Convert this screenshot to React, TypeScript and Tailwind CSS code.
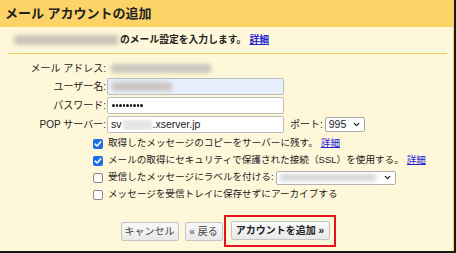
import { ChevronDown } from 'lucide-react'

const font = { fontFamily: '"Liberation Sans", "Noto Sans CJK JP", sans-serif' }

function Blur({ className }: { className: string }) {
  return <div className={`rounded-[3px] bg-[#c9c5bd] blur-[2px] ${className}`} />
}

function Check({ on }: { on?: boolean }) {
  if (on) {
    return (
      <span className="flex h-[10px] w-[10px] shrink-0 items-center justify-center rounded-[2px] bg-[#1a6fe6]">
        <svg width="8" height="8" viewBox="0 0 8 8" fill="none">
          <path d="M1.2 4.2 3.1 6 6.8 1.8" stroke="white" strokeWidth="1.6" strokeLinecap="round" strokeLinejoin="round" />
        </svg>
      </span>
    )
  }
  return <span className="h-[10px] w-[10px] shrink-0 rounded-[2px] border border-[#8a8a8a] bg-white" />
}

function Link({ children }: { children: string }) {
  return <span className="ml-[3px] text-[#2323d8] underline">{children}</span>
}

function Label({ children }: { children: string }) {
  return <div className="w-[107px] shrink-0 pr-[1px] text-right">{children}</div>
}

export default function App() {
  return (
    <div className="h-[253px] w-[456px] bg-[#1a1a1a] text-[#222]" style={font}>
      <div className="flex h-[251px] w-[454px] flex-col border-r border-[#f7cf62] bg-[#fff7d9]">
        {/* Header */}
        <div className="flex h-[27px] shrink-0 items-center bg-[#fcd367] px-[5px] text-[13px] font-bold">
          メール アカウントの追加
        </div>

        {/* Intro line */}
        <div className="flex h-[26px] items-center pl-[14px] text-[9.8px] font-bold">
          <Blur className="mr-[1px] h-[10px] w-[105px]" />
          のメール設定を入力します。
          <Link>詳細</Link>
        </div>
        <div className="mx-[8px] w-[439px] border-b border-[#f5cc5c]" />

        {/* Form */}
        <div className="flex flex-col gap-[2px] pt-[6px] text-[10px]">
          <div className="flex h-[16px] items-center">
            <Label>メール アドレス:</Label>
            <Blur className="ml-[4px] h-[9px] w-[100px]" />
          </div>
          <div className="flex h-[17px] items-center">
            <Label>ユーザー名:</Label>
            <div className="flex h-[17px] w-[177px] items-center rounded-[2px] border border-[#bcbcbc] bg-[#e8f0fe] px-[4px]">
              <Blur className="h-[9px] w-[60px] bg-[#c5cbd6]" />
            </div>
          </div>
          <div className="flex h-[17px] items-center">
            <Label>パスワード:</Label>
            <div className="flex h-[17px] w-[177px] items-center gap-[1px] rounded-[2px] border border-[#bcbcbc] bg-white px-[4px]">
              {Array.from({ length: 9 }).map((_, i) => (
                <span key={i} className="h-[2.5px] w-[2.5px] rounded-full bg-[#111]" />
              ))}
            </div>
          </div>
          <div className="flex h-[17px] items-center">
            <Label>POP サーバー:</Label>
            <div className="flex h-[17px] w-[177px] items-center rounded-[2px] border border-[#bcbcbc] bg-white px-[3px] text-[10.5px]">
              sv
              <div className="mx-[1px] h-[10px] w-[29px] bg-[#e6e6e6] blur-[1px]" />
              .xserver.jp
            </div>
            <span className="ml-[6px]">ポート:</span>
            <div className="ml-[2px] flex h-[15px] w-[40px] items-center justify-between rounded-[2px] border border-[#a8a8a8] bg-white pl-[3px] pr-[3px] text-[10.5px]">
              995
              <ChevronDown size={9} strokeWidth={3.5} />
            </div>
          </div>
        </div>

        {/* Options */}
        <div className="mt-[2px] flex flex-col pl-[93px] text-[9.6px]">
          <div className="flex h-[17px] items-center gap-[5px]">
            <Check on />
            <span>
              取得したメッセージのコピーをサーバーに残す。<Link>詳細</Link>
            </span>
          </div>
          <div className="flex h-[17px] items-center gap-[5px]">
            <Check on />
            <span>
              メールの取得にセキュリティで保護された接続（SSL）を使用する。<Link>詳細</Link>
            </span>
          </div>
          <div className="flex h-[17px] items-center gap-[5px]">
            <Check />
            <span>受信したメッセージにラベルを付ける:</span>
            <div className="-ml-[3px] flex h-[14px] w-[120px] items-center justify-between rounded-[2px] border border-[#b0b0b0] bg-white px-[3px]">
              <div className="h-[7px] w-[96px] rounded-[2px] bg-[#d6d6d6] blur-[2px]" />
              <ChevronDown size={9} strokeWidth={3.5} />
            </div>
          </div>
          <div className="flex h-[17px] items-center gap-[5px]">
            <Check />
            <span>メッセージを受信トレイに保存せずにアーカイブする</span>
          </div>
        </div>

        {/* Buttons */}
        <div className="mt-[12px] flex items-center justify-center pl-[3px] text-[10px]">
          <button className="flex h-[19px] w-[58px] items-center justify-center rounded-[2px] border border-[#c4c4c4] bg-gradient-to-b from-[#f8f8f8] to-[#e9e9e9] text-[#444]">
            キャンセル
          </button>
          <button className="ml-[6px] flex h-[19px] w-[38px] items-center justify-center rounded-[2px] border border-[#c4c4c4] bg-gradient-to-b from-[#f8f8f8] to-[#e9e9e9] text-[#444]">
            « 戻る
          </button>
          <div className="ml-[1px] flex h-[32px] w-[112px] items-center border-2 border-[#e3141b] pb-[1px] pl-[5px]">
            <button className="flex h-[19px] w-[99px] items-center justify-center rounded-[2px] border border-[#c4c4c4] bg-gradient-to-b from-[#f8f8f8] to-[#e9e9e9] font-bold text-[#222]">
              アカウントを追加 »
            </button>
          </div>
        </div>
      </div>
    </div>
  )
}
